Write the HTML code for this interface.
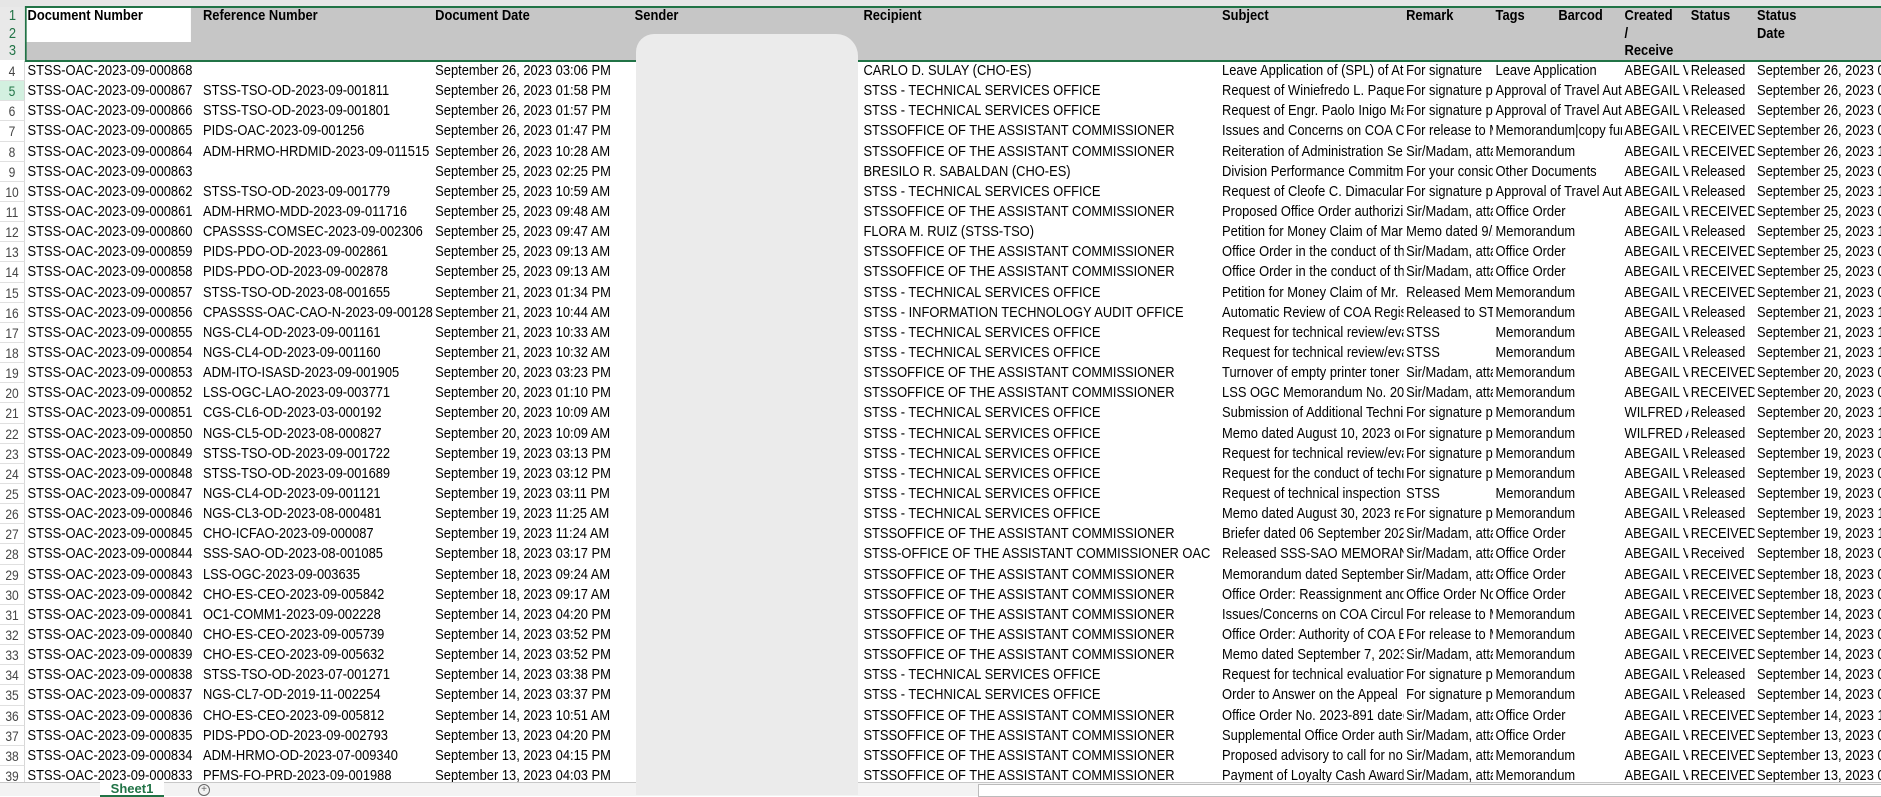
<!DOCTYPE html>
<html><head><meta charset="utf-8">
<style>
html,body{margin:0;padding:0;width:1881px;height:795px;overflow:hidden;background:#fff;font-family:"Liberation Sans",Arial,sans-serif;}
#wrap{position:absolute;left:0;top:0;width:2272px;height:795px;transform:scaleX(0.86);transform-origin:0 0;}
#colbar{position:absolute;left:0;top:0;width:2272px;height:7px;background:#e6e6e6;border-bottom:1px solid #bdbdbd;}
#hdr{position:absolute;left:0;top:7px;height:53px;width:2272px;background:#c6c6c6;}
#hdr .h{position:absolute;top:0;font-weight:bold;font-size:15px;line-height:17.7px;padding-left:3px;white-space:nowrap;}
#rn{position:absolute;left:0;top:7px;width:29px;height:53px;background:#e9e9e9;color:#217346;font-size:15px;text-align:center;line-height:17.7px;border-right:1px solid #c8c8c8;}
#a1{position:absolute;left:29px;top:0;width:193px;height:35px;background:#fff;}
#green{position:absolute;left:29px;top:6px;width:2260px;height:52px;border:2px solid #217346;border-right:none;}
#rows{position:absolute;left:0;top:61px;width:2272px;font-size:15px;}
.r{position:relative;height:20.15px;line-height:20px;white-space:nowrap;}
.r div{position:absolute;top:0;height:20.15px;background:#fff;padding-left:3px;min-width:70px;}
.r div.n{left:0;width:29px;min-width:0;padding:0;text-align:center;color:#444;font-size:14px;border-right:1px solid #d0d0d0;border-bottom:1px solid #e0e0e0;box-sizing:border-box;}
.r div.sel{background:#d3f0e0;color:#217346;}
#blob{position:absolute;left:636px;top:34px;width:222px;height:761px;background:#ebebeb;border-radius:18px 22px 0 0;}
#tabs{position:absolute;left:0;top:782px;width:1881px;height:13px;background:#f3f3f3;border-top:1px solid #c8c8c8;}
#sheet1{position:absolute;left:100px;top:-1px;width:64px;height:13px;background:#fff;color:#217346;font-weight:bold;font-size:13px;text-align:center;line-height:14px;border-bottom:2px solid #217346;}
#plus{position:absolute;left:198px;top:1px;width:10px;height:10px;border:1px solid #666;border-radius:50%;font-size:10px;line-height:10px;text-align:center;color:#666;}
#scroll{position:absolute;left:978px;top:1px;width:903px;height:11px;background:#fff;border:1px solid #bbb;}
</style></head><body>
<div id="wrap">
<div id="colbar"></div>
<div id="hdr">
<div id="a1"></div>
<div class="h" style="left:29px">Document Number</div>
<div class="h" style="left:233px">Reference Number</div>
<div class="h" style="left:503px">Document Date</div>
<div class="h" style="left:735px">Sender</div>
<div class="h" style="left:1001px">Recipient</div>
<div class="h" style="left:1418px">Subject</div>
<div class="h" style="left:1632px">Remark</div>
<div class="h" style="left:1736px">Tags</div>
<div class="h" style="left:1809px">Barcod</div>
<div class="h" style="left:1886px">Created<br>/<br>Receive</div>
<div class="h" style="left:1963px">Status</div>
<div class="h" style="left:2040px">Status<br>Date</div>
</div>
<div id="rn">1<br>2<br>3</div>
<div id="rows">
<div class="r"><div class="n">4</div><div style="left:29px">STSS-OAC-2023-09-000868</div><div style="left:503px">September 26, 2023 03:06 PM</div><div style="left:1001px">CARLO D. SULAY (CHO-ES)</div><div style="left:1418px">Leave Application of (SPL) of Atty</div><div style="left:1632px">For signature</div><div style="left:1736px">Leave Application</div><div style="left:1886px">ABEGAIL V. RAMOS</div><div style="left:1963px">Released</div><div style="left:2040px">September 26, 2023 03:06 PM</div></div>
<div class="r"><div class="n sel">5</div><div style="left:29px">STSS-OAC-2023-09-000867</div><div style="left:233px">STSS-TSO-OD-2023-09-001811</div><div style="left:503px">September 26, 2023 01:58 PM</div><div style="left:1001px">STSS - TECHNICAL SERVICES OFFICE</div><div style="left:1418px">Request of Winiefredo L. Paquete</div><div style="left:1632px">For signature purposes</div><div style="left:1736px">Approval of Travel Authority</div><div style="left:1886px">ABEGAIL V. RAMOS</div><div style="left:1963px">Released</div><div style="left:2040px">September 26, 2023 01:58 PM</div></div>
<div class="r"><div class="n">6</div><div style="left:29px">STSS-OAC-2023-09-000866</div><div style="left:233px">STSS-TSO-OD-2023-09-001801</div><div style="left:503px">September 26, 2023 01:57 PM</div><div style="left:1001px">STSS - TECHNICAL SERVICES OFFICE</div><div style="left:1418px">Request of Engr. Paolo Inigo Martin</div><div style="left:1632px">For signature purposes</div><div style="left:1736px">Approval of Travel Authority</div><div style="left:1886px">ABEGAIL V. RAMOS</div><div style="left:1963px">Released</div><div style="left:2040px">September 26, 2023 01:57 PM</div></div>
<div class="r"><div class="n">7</div><div style="left:29px">STSS-OAC-2023-09-000865</div><div style="left:233px">PIDS-OAC-2023-09-001256</div><div style="left:503px">September 26, 2023 01:47 PM</div><div style="left:1001px">STSSOFFICE OF THE ASSISTANT COMMISSIONER</div><div style="left:1418px">Issues and Concerns on COA Circular</div><div style="left:1632px">For release to Mr.</div><div style="left:1736px">Memorandum|copy furnished</div><div style="left:1886px">ABEGAIL V. RAMOS</div><div style="left:1963px">RECEIVED</div><div style="left:2040px">September 26, 2023 01:47 PM</div></div>
<div class="r"><div class="n">8</div><div style="left:29px">STSS-OAC-2023-09-000864</div><div style="left:233px">ADM-HRMO-HRDMID-2023-09-011515</div><div style="left:503px">September 26, 2023 10:28 AM</div><div style="left:1001px">STSSOFFICE OF THE ASSISTANT COMMISSIONER</div><div style="left:1418px">Reiteration of Administration Services</div><div style="left:1632px">Sir/Madam, attached</div><div style="left:1736px">Memorandum</div><div style="left:1886px">ABEGAIL V. RAMOS</div><div style="left:1963px">RECEIVED</div><div style="left:2040px">September 26, 2023 10:28 AM</div></div>
<div class="r"><div class="n">9</div><div style="left:29px">STSS-OAC-2023-09-000863</div><div style="left:503px">September 25, 2023 02:25 PM</div><div style="left:1001px">BRESILO R. SABALDAN (CHO-ES)</div><div style="left:1418px">Division Performance Commitment</div><div style="left:1632px">For your consideration</div><div style="left:1736px">Other Documents</div><div style="left:1886px">ABEGAIL V. RAMOS</div><div style="left:1963px">Released</div><div style="left:2040px">September 25, 2023 02:25 PM</div></div>
<div class="r"><div class="n">10</div><div style="left:29px">STSS-OAC-2023-09-000862</div><div style="left:233px">STSS-TSO-OD-2023-09-001779</div><div style="left:503px">September 25, 2023 10:59 AM</div><div style="left:1001px">STSS - TECHNICAL SERVICES OFFICE</div><div style="left:1418px">Request of Cleofe C. Dimaculangan</div><div style="left:1632px">For signature purposes</div><div style="left:1736px">Approval of Travel Authority</div><div style="left:1886px">ABEGAIL V. RAMOS</div><div style="left:1963px">Released</div><div style="left:2040px">September 25, 2023 10:59 AM</div></div>
<div class="r"><div class="n">11</div><div style="left:29px">STSS-OAC-2023-09-000861</div><div style="left:233px">ADM-HRMO-MDD-2023-09-011716</div><div style="left:503px">September 25, 2023 09:48 AM</div><div style="left:1001px">STSSOFFICE OF THE ASSISTANT COMMISSIONER</div><div style="left:1418px">Proposed Office Order authorizing</div><div style="left:1632px">Sir/Madam, attached</div><div style="left:1736px">Office Order</div><div style="left:1886px">ABEGAIL V. RAMOS</div><div style="left:1963px">RECEIVED</div><div style="left:2040px">September 25, 2023 09:48 AM</div></div>
<div class="r"><div class="n">12</div><div style="left:29px">STSS-OAC-2023-09-000860</div><div style="left:233px">CPASSSS-COMSEC-2023-09-002306</div><div style="left:503px">September 25, 2023 09:47 AM</div><div style="left:1001px">FLORA M. RUIZ (STSS-TSO)</div><div style="left:1418px">Petition for Money Claim of Mario</div><div style="left:1632px">Memo dated 9/20</div><div style="left:1736px">Memorandum</div><div style="left:1886px">ABEGAIL V. RAMOS</div><div style="left:1963px">Released</div><div style="left:2040px">September 25, 2023 12:00 PM</div></div>
<div class="r"><div class="n">13</div><div style="left:29px">STSS-OAC-2023-09-000859</div><div style="left:233px">PIDS-PDO-OD-2023-09-002861</div><div style="left:503px">September 25, 2023 09:13 AM</div><div style="left:1001px">STSSOFFICE OF THE ASSISTANT COMMISSIONER</div><div style="left:1418px">Office Order in the conduct of the</div><div style="left:1632px">Sir/Madam, attached</div><div style="left:1736px">Office Order</div><div style="left:1886px">ABEGAIL V. RAMOS</div><div style="left:1963px">RECEIVED</div><div style="left:2040px">September 25, 2023 09:13 AM</div></div>
<div class="r"><div class="n">14</div><div style="left:29px">STSS-OAC-2023-09-000858</div><div style="left:233px">PIDS-PDO-OD-2023-09-002878</div><div style="left:503px">September 25, 2023 09:13 AM</div><div style="left:1001px">STSSOFFICE OF THE ASSISTANT COMMISSIONER</div><div style="left:1418px">Office Order in the conduct of the</div><div style="left:1632px">Sir/Madam, attached</div><div style="left:1736px">Office Order</div><div style="left:1886px">ABEGAIL V. RAMOS</div><div style="left:1963px">RECEIVED</div><div style="left:2040px">September 25, 2023 09:13 AM</div></div>
<div class="r"><div class="n">15</div><div style="left:29px">STSS-OAC-2023-09-000857</div><div style="left:233px">STSS-TSO-OD-2023-08-001655</div><div style="left:503px">September 21, 2023 01:34 PM</div><div style="left:1001px">STSS - TECHNICAL SERVICES OFFICE</div><div style="left:1418px">Petition for Money Claim of Mr.</div><div style="left:1632px">Released Memo</div><div style="left:1736px">Memorandum</div><div style="left:1886px">ABEGAIL V. RAMOS</div><div style="left:1963px">RECEIVED</div><div style="left:2040px">September 21, 2023 01:34 PM</div></div>
<div class="r"><div class="n">16</div><div style="left:29px">STSS-OAC-2023-09-000856</div><div style="left:233px">CPASSSS-OAC-CAO-N-2023-09-00128</div><div style="left:503px">September 21, 2023 10:44 AM</div><div style="left:1001px">STSS - INFORMATION TECHNOLOGY AUDIT OFFICE</div><div style="left:1418px">Automatic Review of COA Registry</div><div style="left:1632px">Released to STSS</div><div style="left:1736px">Memorandum</div><div style="left:1886px">ABEGAIL V. RAMOS</div><div style="left:1963px">Released</div><div style="left:2040px">September 21, 2023 10:44 AM</div></div>
<div class="r"><div class="n">17</div><div style="left:29px">STSS-OAC-2023-09-000855</div><div style="left:233px">NGS-CL4-OD-2023-09-001161</div><div style="left:503px">September 21, 2023 10:33 AM</div><div style="left:1001px">STSS - TECHNICAL SERVICES OFFICE</div><div style="left:1418px">Request for technical review/evaluation</div><div style="left:1632px;min-width:100px">STSS</div><div style="left:1736px">Memorandum</div><div style="left:1886px">ABEGAIL V. RAMOS</div><div style="left:1963px">Released</div><div style="left:2040px">September 21, 2023 10:33 AM</div></div>
<div class="r"><div class="n">18</div><div style="left:29px">STSS-OAC-2023-09-000854</div><div style="left:233px">NGS-CL4-OD-2023-09-001160</div><div style="left:503px">September 21, 2023 10:32 AM</div><div style="left:1001px">STSS - TECHNICAL SERVICES OFFICE</div><div style="left:1418px">Request for technical review/evaluation</div><div style="left:1632px;min-width:100px">STSS</div><div style="left:1736px">Memorandum</div><div style="left:1886px">ABEGAIL V. RAMOS</div><div style="left:1963px">Released</div><div style="left:2040px">September 21, 2023 10:32 AM</div></div>
<div class="r"><div class="n">19</div><div style="left:29px">STSS-OAC-2023-09-000853</div><div style="left:233px">ADM-ITO-ISASD-2023-09-001905</div><div style="left:503px">September 20, 2023 03:23 PM</div><div style="left:1001px">STSSOFFICE OF THE ASSISTANT COMMISSIONER</div><div style="left:1418px">Turnover of empty printer toner</div><div style="left:1632px">Sir/Madam, attached</div><div style="left:1736px">Memorandum</div><div style="left:1886px">ABEGAIL V. RAMOS</div><div style="left:1963px">RECEIVED</div><div style="left:2040px">September 20, 2023 03:23 PM</div></div>
<div class="r"><div class="n">20</div><div style="left:29px">STSS-OAC-2023-09-000852</div><div style="left:233px">LSS-OGC-LAO-2023-09-003771</div><div style="left:503px">September 20, 2023 01:10 PM</div><div style="left:1001px">STSSOFFICE OF THE ASSISTANT COMMISSIONER</div><div style="left:1418px">LSS OGC Memorandum No. 2023</div><div style="left:1632px">Sir/Madam, attached</div><div style="left:1736px">Memorandum</div><div style="left:1886px">ABEGAIL V. RAMOS</div><div style="left:1963px">RECEIVED</div><div style="left:2040px">September 20, 2023 01:10 PM</div></div>
<div class="r"><div class="n">21</div><div style="left:29px">STSS-OAC-2023-09-000851</div><div style="left:233px">CGS-CL6-OD-2023-03-000192</div><div style="left:503px">September 20, 2023 10:09 AM</div><div style="left:1001px">STSS - TECHNICAL SERVICES OFFICE</div><div style="left:1418px">Submission of Additional Technical</div><div style="left:1632px">For signature purposes</div><div style="left:1736px">Memorandum</div><div style="left:1886px">WILFRED A. CRUZ</div><div style="left:1963px">Released</div><div style="left:2040px">September 20, 2023 10:09 AM</div></div>
<div class="r"><div class="n">22</div><div style="left:29px">STSS-OAC-2023-09-000850</div><div style="left:233px">NGS-CL5-OD-2023-08-000827</div><div style="left:503px">September 20, 2023 10:09 AM</div><div style="left:1001px">STSS - TECHNICAL SERVICES OFFICE</div><div style="left:1418px">Memo dated August 10, 2023 on</div><div style="left:1632px">For signature purposes</div><div style="left:1736px">Memorandum</div><div style="left:1886px">WILFRED A. CRUZ</div><div style="left:1963px">Released</div><div style="left:2040px">September 20, 2023 10:09 AM</div></div>
<div class="r"><div class="n">23</div><div style="left:29px">STSS-OAC-2023-09-000849</div><div style="left:233px">STSS-TSO-OD-2023-09-001722</div><div style="left:503px">September 19, 2023 03:13 PM</div><div style="left:1001px">STSS - TECHNICAL SERVICES OFFICE</div><div style="left:1418px">Request for technical review/evaluation</div><div style="left:1632px">For signature purposes</div><div style="left:1736px">Memorandum</div><div style="left:1886px">ABEGAIL V. RAMOS</div><div style="left:1963px">Released</div><div style="left:2040px">September 19, 2023 03:13 PM</div></div>
<div class="r"><div class="n">24</div><div style="left:29px">STSS-OAC-2023-09-000848</div><div style="left:233px">STSS-TSO-OD-2023-09-001689</div><div style="left:503px">September 19, 2023 03:12 PM</div><div style="left:1001px">STSS - TECHNICAL SERVICES OFFICE</div><div style="left:1418px">Request for the conduct of technical</div><div style="left:1632px">For signature purposes</div><div style="left:1736px">Memorandum</div><div style="left:1886px">ABEGAIL V. RAMOS</div><div style="left:1963px">Released</div><div style="left:2040px">September 19, 2023 03:12 PM</div></div>
<div class="r"><div class="n">25</div><div style="left:29px">STSS-OAC-2023-09-000847</div><div style="left:233px">NGS-CL4-OD-2023-09-001121</div><div style="left:503px">September 19, 2023 03:11 PM</div><div style="left:1001px">STSS - TECHNICAL SERVICES OFFICE</div><div style="left:1418px">Request of technical inspection</div><div style="left:1632px;min-width:100px">STSS</div><div style="left:1736px">Memorandum</div><div style="left:1886px">ABEGAIL V. RAMOS</div><div style="left:1963px">Released</div><div style="left:2040px">September 19, 2023 03:11 PM</div></div>
<div class="r"><div class="n">26</div><div style="left:29px">STSS-OAC-2023-09-000846</div><div style="left:233px">NGS-CL3-OD-2023-08-000481</div><div style="left:503px">September 19, 2023 11:25 AM</div><div style="left:1001px">STSS - TECHNICAL SERVICES OFFICE</div><div style="left:1418px">Memo dated August 30, 2023 re</div><div style="left:1632px">For signature purposes</div><div style="left:1736px">Memorandum</div><div style="left:1886px">ABEGAIL V. RAMOS</div><div style="left:1963px">Released</div><div style="left:2040px">September 19, 2023 11:25 AM</div></div>
<div class="r"><div class="n">27</div><div style="left:29px">STSS-OAC-2023-09-000845</div><div style="left:233px">CHO-ICFAO-2023-09-000087</div><div style="left:503px">September 19, 2023 11:24 AM</div><div style="left:1001px">STSSOFFICE OF THE ASSISTANT COMMISSIONER</div><div style="left:1418px">Briefer dated 06 September 2023</div><div style="left:1632px">Sir/Madam, attached</div><div style="left:1736px">Office Order</div><div style="left:1886px">ABEGAIL V. RAMOS</div><div style="left:1963px">RECEIVED</div><div style="left:2040px">September 19, 2023 11:24 AM</div></div>
<div class="r"><div class="n">28</div><div style="left:29px">STSS-OAC-2023-09-000844</div><div style="left:233px">SSS-SAO-OD-2023-08-001085</div><div style="left:503px">September 18, 2023 03:17 PM</div><div style="left:1001px">STSS-OFFICE OF THE ASSISTANT COMMISSIONER OAC</div><div style="left:1418px">Released SSS-SAO MEMORANDUM</div><div style="left:1632px">Sir/Madam, attached</div><div style="left:1736px">Office Order</div><div style="left:1886px">ABEGAIL V. RAMOS</div><div style="left:1963px">Received</div><div style="left:2040px">September 18, 2023 03:17 PM</div></div>
<div class="r"><div class="n">29</div><div style="left:29px">STSS-OAC-2023-09-000843</div><div style="left:233px">LSS-OGC-2023-09-003635</div><div style="left:503px">September 18, 2023 09:24 AM</div><div style="left:1001px">STSSOFFICE OF THE ASSISTANT COMMISSIONER</div><div style="left:1418px">Memorandum dated September</div><div style="left:1632px">Sir/Madam, attached</div><div style="left:1736px">Office Order</div><div style="left:1886px">ABEGAIL V. RAMOS</div><div style="left:1963px">RECEIVED</div><div style="left:2040px">September 18, 2023 09:24 AM</div></div>
<div class="r"><div class="n">30</div><div style="left:29px">STSS-OAC-2023-09-000842</div><div style="left:233px">CHO-ES-CEO-2023-09-005842</div><div style="left:503px">September 18, 2023 09:17 AM</div><div style="left:1001px">STSSOFFICE OF THE ASSISTANT COMMISSIONER</div><div style="left:1418px">Office Order: Reassignment and</div><div style="left:1632px">Office Order No.</div><div style="left:1736px">Office Order</div><div style="left:1886px">ABEGAIL V. RAMOS</div><div style="left:1963px">RECEIVED</div><div style="left:2040px">September 18, 2023 09:17 AM</div></div>
<div class="r"><div class="n">31</div><div style="left:29px">STSS-OAC-2023-09-000841</div><div style="left:233px">OC1-COMM1-2023-09-002228</div><div style="left:503px">September 14, 2023 04:20 PM</div><div style="left:1001px">STSSOFFICE OF THE ASSISTANT COMMISSIONER</div><div style="left:1418px">Issues/Concerns on COA Circular</div><div style="left:1632px">For release to Mr.</div><div style="left:1736px">Memorandum</div><div style="left:1886px">ABEGAIL V. RAMOS</div><div style="left:1963px">RECEIVED</div><div style="left:2040px">September 14, 2023 04:20 PM</div></div>
<div class="r"><div class="n">32</div><div style="left:29px">STSS-OAC-2023-09-000840</div><div style="left:233px">CHO-ES-CEO-2023-09-005739</div><div style="left:503px">September 14, 2023 03:52 PM</div><div style="left:1001px">STSSOFFICE OF THE ASSISTANT COMMISSIONER</div><div style="left:1418px">Office Order: Authority of COA Employees</div><div style="left:1632px">For release to Mr.</div><div style="left:1736px">Memorandum</div><div style="left:1886px">ABEGAIL V. RAMOS</div><div style="left:1963px">RECEIVED</div><div style="left:2040px">September 14, 2023 03:52 PM</div></div>
<div class="r"><div class="n">33</div><div style="left:29px">STSS-OAC-2023-09-000839</div><div style="left:233px">CHO-ES-CEO-2023-09-005632</div><div style="left:503px">September 14, 2023 03:52 PM</div><div style="left:1001px">STSSOFFICE OF THE ASSISTANT COMMISSIONER</div><div style="left:1418px">Memo dated September 7, 2023</div><div style="left:1632px">Sir/Madam, attached</div><div style="left:1736px">Memorandum</div><div style="left:1886px">ABEGAIL V. RAMOS</div><div style="left:1963px">RECEIVED</div><div style="left:2040px">September 14, 2023 03:52 PM</div></div>
<div class="r"><div class="n">34</div><div style="left:29px">STSS-OAC-2023-09-000838</div><div style="left:233px">STSS-TSO-OD-2023-07-001271</div><div style="left:503px">September 14, 2023 03:38 PM</div><div style="left:1001px">STSS - TECHNICAL SERVICES OFFICE</div><div style="left:1418px">Request for technical evaluation</div><div style="left:1632px">For signature purposes</div><div style="left:1736px">Memorandum</div><div style="left:1886px">ABEGAIL V. RAMOS</div><div style="left:1963px">Released</div><div style="left:2040px">September 14, 2023 03:38 PM</div></div>
<div class="r"><div class="n">35</div><div style="left:29px">STSS-OAC-2023-09-000837</div><div style="left:233px">NGS-CL7-OD-2019-11-002254</div><div style="left:503px">September 14, 2023 03:37 PM</div><div style="left:1001px">STSS - TECHNICAL SERVICES OFFICE</div><div style="left:1418px">Order to Answer on the Appeal</div><div style="left:1632px">For signature purposes</div><div style="left:1736px">Memorandum</div><div style="left:1886px">ABEGAIL V. RAMOS</div><div style="left:1963px">Released</div><div style="left:2040px">September 14, 2023 03:37 PM</div></div>
<div class="r"><div class="n">36</div><div style="left:29px">STSS-OAC-2023-09-000836</div><div style="left:233px">CHO-ES-CEO-2023-09-005812</div><div style="left:503px">September 14, 2023 10:51 AM</div><div style="left:1001px">STSSOFFICE OF THE ASSISTANT COMMISSIONER</div><div style="left:1418px">Office Order No. 2023-891 dated</div><div style="left:1632px">Sir/Madam, attached</div><div style="left:1736px">Office Order</div><div style="left:1886px">ABEGAIL V. RAMOS</div><div style="left:1963px">RECEIVED</div><div style="left:2040px">September 14, 2023 10:51 AM</div></div>
<div class="r"><div class="n">37</div><div style="left:29px">STSS-OAC-2023-09-000835</div><div style="left:233px">PIDS-PDO-OD-2023-09-002793</div><div style="left:503px">September 13, 2023 04:20 PM</div><div style="left:1001px">STSSOFFICE OF THE ASSISTANT COMMISSIONER</div><div style="left:1418px">Supplemental Office Order authorizing</div><div style="left:1632px">Sir/Madam, attached</div><div style="left:1736px">Office Order</div><div style="left:1886px">ABEGAIL V. RAMOS</div><div style="left:1963px">RECEIVED</div><div style="left:2040px">September 13, 2023 04:20 PM</div></div>
<div class="r"><div class="n">38</div><div style="left:29px">STSS-OAC-2023-09-000834</div><div style="left:233px">ADM-HRMO-OD-2023-07-009340</div><div style="left:503px">September 13, 2023 04:15 PM</div><div style="left:1001px">STSSOFFICE OF THE ASSISTANT COMMISSIONER</div><div style="left:1418px">Proposed advisory to call for no</div><div style="left:1632px">Sir/Madam, attached</div><div style="left:1736px">Memorandum</div><div style="left:1886px">ABEGAIL V. RAMOS</div><div style="left:1963px">RECEIVED</div><div style="left:2040px">September 13, 2023 04:15 PM</div></div>
<div class="r"><div class="n">39</div><div style="left:29px">STSS-OAC-2023-09-000833</div><div style="left:233px">PFMS-FO-PRD-2023-09-001988</div><div style="left:503px">September 13, 2023 04:03 PM</div><div style="left:1001px">STSSOFFICE OF THE ASSISTANT COMMISSIONER</div><div style="left:1418px">Payment of Loyalty Cash Award</div><div style="left:1632px">Sir/Madam, attached</div><div style="left:1736px">Memorandum</div><div style="left:1886px">ABEGAIL V. RAMOS</div><div style="left:1963px">RECEIVED</div><div style="left:2040px">September 13, 2023 04:03 PM</div></div>
</div>
<div id="green"></div>
</div>
<div id="tabs"><div id="sheet1">Sheet1</div><div id="plus">+</div><div id="scroll"></div></div>
<div id="blob"></div>
</body></html>
